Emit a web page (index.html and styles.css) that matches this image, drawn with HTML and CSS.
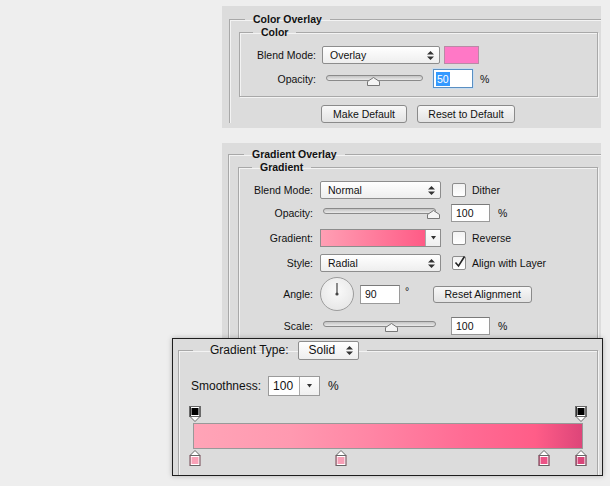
FILE: index.html
```html
<!DOCTYPE html>
<html>
<head>
<meta charset="utf-8">
<link rel="stylesheet" href="styles.css">
</head>
<body>
<div class="panel panel-a">
  <fieldset class="outer">
    <legend class="lg-outer">Color Overlay</legend>
    <fieldset class="inner">
      <legend class="lg-inner">Color</legend>
      <div class="row r1">
        <span class="lbl">Blend Mode:</span>
        <div class="select w118">Overlay<svg class="updown" width="7" height="9" viewBox="0 0 7 9"><path d="M3.5 0L7 3.5H0z M3.5 9L7 5.5H0z" fill="#333"/></svg></div>
        <div class="swatch"></div>
      </div>
      <div class="row r2">
        <span class="lbl">Opacity:</span>
        <div class="slider s1">
          <div class="track"></div>
          <svg class="thumb t-op1" width="13" height="9" viewBox="0 0 13 9"><path d="M0.5 8.5V4.5L6.5 0.5L12.5 4.5V8.5Z" fill="#f4f4f4" stroke="#777"/></svg>
        </div>
        <div class="input focus"><span class="sel">50</span></div>
        <span class="pct">%</span>
      </div>
    </fieldset>
    <div class="btnrow">
      <div class="btn b-make">Make Default</div>
      <div class="btn b-reset">Reset to Default</div>
    </div>
  </fieldset>
</div>

<div class="panel panel-b">
  <fieldset class="outer">
    <legend class="lg-outer">Gradient Overlay</legend>
    <fieldset class="inner">
      <legend class="lg-inner">Gradient</legend>
      <div class="row g1">
        <span class="lbl">Blend Mode:</span>
        <div class="select w121">Normal<svg class="updown" width="7" height="9" viewBox="0 0 7 9"><path d="M3.5 0L7 3.5H0z M3.5 9L7 5.5H0z" fill="#333"/></svg></div>
        <div class="check"></div><span class="cklbl">Dither</span>
      </div>
      <div class="row g2">
        <span class="lbl">Opacity:</span>
        <div class="slider s2">
          <div class="track"></div>
          <svg class="thumb t-op2" width="13" height="9" viewBox="0 0 13 9"><path d="M0.5 8.5V4.5L6.5 0.5L12.5 4.5V8.5Z" fill="#f4f4f4" stroke="#777"/></svg>
        </div>
        <div class="input w38">100</div>
        <span class="pct">%</span>
      </div>
      <div class="row g3">
        <span class="lbl">Gradient:</span>
        <div class="gradpick">
          <div class="gradsw"></div>
          <div class="gradarrow"><svg width="7" height="4" viewBox="0 0 7 4"><path d="M1 0H6L3.5 3.5Z" fill="#333"/></svg></div>
        </div>
        <div class="check"></div><span class="cklbl">Reverse</span>
      </div>
      <div class="row g4">
        <span class="lbl">Style:</span>
        <div class="select w121">Radial<svg class="updown" width="7" height="9" viewBox="0 0 7 9"><path d="M3.5 0L7 3.5H0z M3.5 9L7 5.5H0z" fill="#333"/></svg></div>
        <div class="check checked"><svg width="14" height="14" viewBox="0 0 14 14"><path d="M2.5 7.5L5.5 11L11.5 1.5" fill="none" stroke="#222" stroke-width="1.6"/></svg></div><span class="cklbl">Align with Layer</span>
      </div>
      <div class="row g5">
        <span class="lbl">Angle:</span>
        <div class="dial"><svg width="34" height="34" viewBox="0 0 34 34"><line x1="17" y1="6" x2="17" y2="16.5" stroke="#444" stroke-width="1.2"/><circle cx="17" cy="17" r="1.6" fill="#444"/></svg></div>
        <div class="input w40">90</div>
        <span class="deg">°</span>
        <div class="btn b-align">Reset Alignment</div>
      </div>
      <div class="row g6">
        <span class="lbl">Scale:</span>
        <div class="slider s2">
          <div class="track"></div>
          <svg class="thumb t-scale" width="13" height="9" viewBox="0 0 13 9"><path d="M0.5 8.5V4.5L6.5 0.5L12.5 4.5V8.5Z" fill="#f4f4f4" stroke="#777"/></svg>
        </div>
        <div class="input w38">100</div>
        <span class="pct">%</span>
      </div>
    </fieldset>
  </fieldset>
</div>

<div class="popup">
  <fieldset class="pframe">
    <legend class="plegend">
      <span class="ptext">Gradient Type:</span>
      <div class="select psel">Solid<svg class="updown" width="7" height="9" viewBox="0 0 7 9"><path d="M3.5 0L7 3.5H0z M3.5 9L7 5.5H0z" fill="#333"/></svg></div>
    </legend>
    <div class="smooth">
      <span class="ptext">Smoothness:</span>
      <div class="combo"><span class="cval">100</span><span class="carrow"><svg width="7" height="4" viewBox="0 0 7 4"><path d="M1 0H6L3.5 3.5Z" fill="#333"/></svg></span></div>
      <span class="ptext ppct">%</span>
    </div>
    <div class="stops top">
      <div class="stop opstop" style="left:0%"><span class="sq"></span><svg class="tri" width="11" height="6" viewBox="0 0 11 6"><path d="M0.5 0.5H10.5L5.5 5.5Z" fill="#fff" stroke="#666"/></svg></div>
      <div class="stop opstop" style="left:100%"><span class="sq"></span><svg class="tri" width="11" height="6" viewBox="0 0 11 6"><path d="M0.5 0.5H10.5L5.5 5.5Z" fill="#fff" stroke="#666"/></svg></div>
    </div>
    <div class="gbar"></div>
    <div class="stops bottom">
      <div class="stop colstop" style="left:0%"><svg class="tri" width="11" height="6" viewBox="0 0 11 6"><path d="M0.5 5.5H10.5L5.5 0.5Z" fill="#fff" stroke="#666"/></svg><span class="sq" style="background:#f9a1b7"></span></div>
      <div class="stop colstop" style="left:37.8%"><svg class="tri" width="11" height="6" viewBox="0 0 11 6"><path d="M0.5 5.5H10.5L5.5 0.5Z" fill="#fff" stroke="#666"/></svg><span class="sq" style="background:#f69fb6"></span></div>
      <div class="stop colstop" style="left:90.4%"><svg class="tri" width="11" height="6" viewBox="0 0 11 6"><path d="M0.5 5.5H10.5L5.5 0.5Z" fill="#fff" stroke="#666"/></svg><span class="sq" style="background:#ec5487"></span></div>
      <div class="stop colstop" style="left:100%"><svg class="tri" width="11" height="6" viewBox="0 0 11 6"><path d="M0.5 5.5H10.5L5.5 0.5Z" fill="#fff" stroke="#666"/></svg><span class="sq" style="background:#d9467a"></span></div>
    </div>
  </fieldset>
</div>
</body>
</html>
```
FILE: styles.css
```css
html, body {
  margin: 0;
  padding: 0;
}
body {
  background: #eeeeee;
  width: 610px;
  height: 486px;
  overflow: hidden;
  position: relative;
  font-family: "Liberation Sans", Arial, sans-serif;
  font-size: 10.5px;
  color: #111;
  padding: 6px 0 0 222px;
  box-sizing: border-box;
}
.panel {
  width: 379px;
  background: #dcdcdc;
  box-sizing: border-box;
}
.panel-a {
  padding: 7px 0 5px 7px;
}
.panel-b {
  margin-top: 15px;
  padding: 5px 0 0 6px;
  height: 230px;
}
fieldset {
  margin: 0;
  padding: 0;
  min-width: 0;
  border: 1px solid #a8a8a8;
  box-shadow: inset 1px 1px 0 #f3f3f3, 1px 1px 0 #f3f3f3;
}
.outer {
  border-right: 0;
  border-bottom: 0;
  box-shadow: inset 1px 1px 0 #f3f3f3;
}
legend {
  padding: 0;
  line-height: 13px;
  font-weight: bold;
}
.lg-outer {
  margin-left: 15px;
  padding: 0 8px;
}
.lg-inner {
  margin-left: 13px;
  padding: 0 8px;
}
.inner {
  margin: 0 3px 0 9px;
}
.panel-a .inner {
  padding: 7px 0 8px 0;
}
.panel-b .inner {
  padding: 7px 0 20px 0;
  border-bottom: 0;
}
.row {
  display: flex;
  align-items: center;
}
.lbl {
  text-align: right;
  flex: none;
}
.panel-a .lbl {
  width: 76px;
  margin-right: 6px;
}
.panel-b .lbl {
  width: 74px;
  margin-right: 7px;
}
.r1 { height: 18px; }
.r2 { height: 19px; margin-top: 5px; }
.g1 { height: 18px; }
.g2 { height: 18px; margin-top: 5px; }
.g3 { height: 18px; margin-top: 7px; }
.g4 { height: 18px; margin-top: 7px; }
.g5 { height: 34px; margin-top: 5px; }
.g6 { height: 18px; margin-top: 6px; }

.select {
  height: 18px;
  box-sizing: border-box;
  border: 1px solid #8d8d8d;
  border-radius: 2px;
  background: linear-gradient(#ffffff, #eeeeee);
  display: flex;
  align-items: center;
  justify-content: space-between;
  padding: 0 5px 0 7px;
  flex: none;
}
.w118 { width: 118px; }
.w121 { width: 121px; }
.updown { display: block; }
.swatch {
  width: 35px;
  height: 18px;
  margin-left: 4px;
  background: #ff78c6;
  border: 1px solid #b98aa6;
  box-sizing: border-box;
}
.slider {
  position: relative;
  height: 18px;
  flex: none;
}
.s1 { width: 105px; }
.s2 { width: 121px; }
.track {
  position: absolute;
  left: 4px;
  right: 4px;
  top: 5px;
  height: 4px;
  border: 1px solid #8a8a8a;
  border-radius: 3px;
  background: linear-gradient(#c4c4c4, #eaeaea);
}
.s2 .track { left: 3px; right: 5px; top: 4px; }
.thumb {
  position: absolute;
  top: 7px;
  display: block;
}
.s2 .thumb { top: 6px; }
.t-op1 { left: 45px; }
.t-op2 { left: 107px; }
.t-scale { left: 65px; }

.input {
  height: 19px;
  box-sizing: border-box;
  background: #fff;
  border: 1px solid #9a9a9a;
  border-top-color: #7a7a7a;
  padding: 0 4px;
  display: flex;
  align-items: center;
  flex: none;
}
.focus {
  width: 40px;
  margin-left: 6px;
  border: 1px solid #5a8fc2;
  box-shadow: 0 0 0 1px #c8dcef;
  padding-left: 2px;
}
.sel {
  background: #3399ff;
  color: #fff;
  line-height: 14px;
  padding: 0 1px;
}
.pct { margin-left: 7px; }
.panel-b .pct { margin-left: 8px; }
.w38 { width: 39px; margin-left: 10px; height: 18px; }
.w40 { width: 40px; margin-left: 6px; height: 19px; }
.deg { margin-left: 5px; margin-top: -6px; }

.check {
  width: 14px;
  height: 14px;
  margin-left: 11px;
  box-sizing: border-box;
  border: 1px solid #8d8d8d;
  border-radius: 2px;
  background: linear-gradient(#f2f2f2, #ffffff);
  flex: none;
  position: relative;
}
.check svg { position: absolute; left: 0; top: -2px; }
.cklbl { margin-left: 6px; }

.gradpick {
  width: 121px;
  height: 18px;
  display: flex;
  border: 1px solid #8d8d8d;
  box-sizing: border-box;
  flex: none;
}
.gradsw {
  flex: 1;
  background: linear-gradient(to right, #ff9fb4, #ff5b86);
}
.gradarrow {
  width: 14px;
  border-left: 1px solid #aaa;
  background: linear-gradient(#fdfdfd, #efefef);
  display: flex;
  align-items: center;
  justify-content: center;
}
.gradarrow svg { display: block; }

.dial {
  width: 34px;
  height: 34px;
  box-sizing: border-box;
  border: 1px solid #9c9c9c;
  border-radius: 50%;
  background: radial-gradient(circle at 50% 40%, #fafafa, #e2e2e2);
  flex: none;
  position: relative;
}
.dial svg { position: absolute; left: -1px; top: -1px; }

.btn {
  height: 18px;
  box-sizing: border-box;
  border: 1px solid #8a8a8a;
  border-radius: 3px;
  background: linear-gradient(#f8f8f8, #e3e3e3);
  display: flex;
  align-items: center;
  justify-content: center;
  flex: none;
}
.btnrow {
  display: flex;
  margin-top: 8px;
  padding-left: 91px;
}
.b-make { width: 86px; }
.b-reset { width: 98px; margin-left: 10px; }
.b-align { width: 99px; height: 17px; margin-left: 24px; }

/* popup */
.popup {
  position: absolute;
  left: 172px;
  top: 338px;
  width: 431px;
  height: 138px;
  box-sizing: border-box;
  border: 1px solid #1e1e1e;
  background: #dcdcdc;
  box-shadow: 0 0 5px rgba(0,0,0,0.25);
  font-size: 12px;
  padding: 1px 4px 0 5px;
  overflow: hidden;
}
.pframe {
  border-bottom: 0;
  height: 150px;
  padding: 0 0 0 12px;
}
.plegend {
  margin-left: 2px;
  padding: 0 8px 0 17px;
  font-weight: normal;
  display: flex;
  align-items: center;
  line-height: 20px;
  height: 20px;
}
.ptext { color: #111; }
.psel {
  width: 61px;
  height: 19px;
  margin-left: 9px;
  padding-left: 10px;
}
.smooth {
  display: flex;
  align-items: center;
  margin-top: 16px;
  height: 20px;
}
.combo {
  margin-left: 7px;
  width: 52px;
  height: 20px;
  box-sizing: border-box;
  border: 1px solid #9a9a9a;
  background: #fff;
  display: flex;
}
.cval {
  width: 31px;
  padding-left: 4px;
  display: flex;
  align-items: center;
  border-right: 1px solid #aaa;
  box-sizing: border-box;
}
.carrow {
  flex: 1;
  display: flex;
  align-items: center;
  justify-content: center;
  background: linear-gradient(#fdfdfd, #f0f0f0);
}
.carrow svg { display: block; }
.ppct { margin-left: 8px; }

.stops {
  position: relative;
  margin-left: 4px;
  width: 386px;
  height: 17px;
}
.stops.top { margin-top: 10px; }
.stops.bottom { height: 18px; }
.stop {
  position: absolute;
  top: 0;
  width: 11px;
  transform: translateX(-50%);
  display: flex;
  flex-direction: column;
  align-items: center;
}
.stop .sq {
  display: block;
  width: 11px;
  height: 11px;
  box-sizing: border-box;
  border: 1px solid #666;
  box-shadow: inset 0 0 0 1px #fff;
}
.opstop .sq { background: #000; }
.stop .tri { display: block; margin-top: -1px; }
.colstop .tri { margin-top: 1px; margin-bottom: -1px; }
.gbar {
  margin-left: 2px;
  width: 390px;
  height: 26px;
  box-sizing: border-box;
  border: 1px solid #999;
  background: linear-gradient(to right, #ffa4b7 0%, #ff99b0 25%, #ff86a5 45%, #ff6b94 70%, #ff5d88 88%, #dd4579 100%);
}
```
